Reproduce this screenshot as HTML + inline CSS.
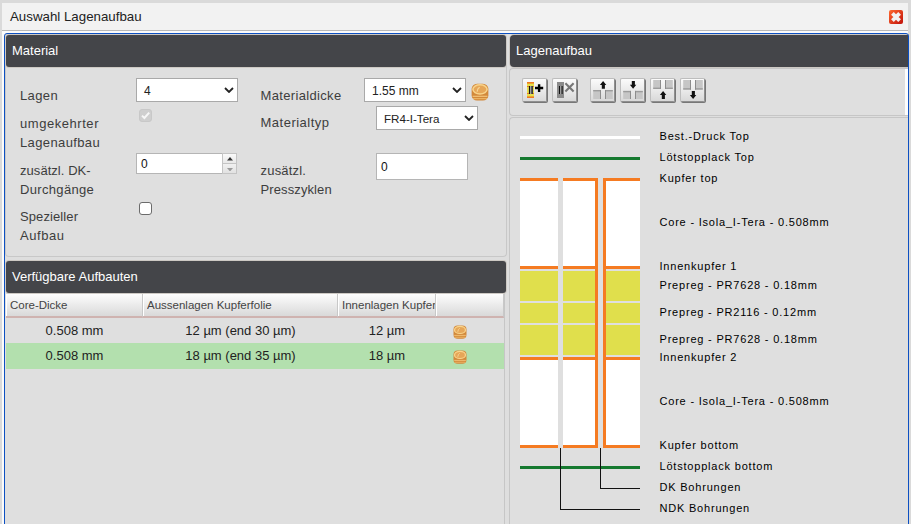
<!DOCTYPE html>
<html><head><meta charset="utf-8">
<style>
*{box-sizing:border-box}
html,body{margin:0;padding:0}
body{width:911px;height:524px;overflow:hidden;position:relative;background:#dadada;font-family:"Liberation Sans",sans-serif;color:#222}
.a{position:absolute}
.t{position:absolute;white-space:nowrap;line-height:1}
.t13{font-size:13px}
.lbl{font-size:13px;color:#3d3d3d;letter-spacing:0.3px}
.hd{position:absolute;background:#444549;border-radius:3px;box-shadow:0 0 0 1px #cdc9c4}
.ht{position:absolute;white-space:nowrap;line-height:1;color:#fff;font-size:13px}
.sel{position:absolute;background:#fff;border:1px solid #a9a9a9}
.chev{position:absolute;width:10px;height:6px}
.btn{position:absolute;width:25px;height:24px;border:1px solid #bdbdbd;border-right-color:#8f8f8f;border-bottom-color:#8f8f8f;border-radius:2px;background:linear-gradient(#fbfbfb,#d9d9d9);box-shadow:1px 1px 0 #777}
.dl{position:absolute;white-space:nowrap;line-height:1;font-size:11px;letter-spacing:0.8px;color:#000}
.th{position:absolute;top:294px;height:24px;background:linear-gradient(#fdfdfd,#d9d9d9);border-bottom:2px solid #cfb3b0;border-right:1px solid #c8c8c8;box-shadow:inset 1px 0 0 #fff}
.tht{position:absolute;white-space:nowrap;line-height:1;font-size:11.5px;color:#444;overflow:hidden}
</style></head><body>
<!-- dialog frame -->
<div class="a" style="left:2px;top:3px;width:906px;height:521px;background:#fbfbfb"></div>
<div class="a" style="left:2px;top:3px;width:906px;height:28px;background:#f2f2f2;border-bottom:1px solid #b9b9b9"></div>
<div class="t t13" style="left:10px;top:10px;font-size:13.3px;color:#222">Auswahl Lagenaufbau</div>
<svg class="a" style="left:889px;top:10px" width="14" height="14" viewBox="0 0 14 14">
<defs><linearGradient id="rg" x1="0" y1="0" x2="1" y2="1"><stop offset="0" stop-color="#ff6a30"/><stop offset="1" stop-color="#c0100a"/></linearGradient></defs>
<rect x="0" y="0" width="14" height="14" rx="2" fill="url(#rg)"/>
<path d="M3.4 3.4 L10.6 10.6 M10.6 3.4 L3.4 10.6" stroke="#f2f2f2" stroke-width="3.8"/>
</svg>
<!-- content container -->
<div class="a" style="left:4px;top:33px;width:905px;height:520px;border-radius:4px;background:#dedede"></div>

<!-- Material panel -->
<div class="a" style="left:5px;top:60px;width:502px;height:197px;background:#dfdfdf;border:1px solid #c8c8c8;border-top:none;border-radius:0 0 4px 4px"></div>
<div class="hd" style="left:6px;top:35px;width:500px;height:32px"></div>
<div class="ht" style="left:12px;top:44px">Material</div>

<div class="t lbl" style="left:20px;top:89px;letter-spacing:0.37px">Lagen</div>
<div class="t lbl" style="left:20px;top:117px;letter-spacing:0.55px">umgekehrter</div>
<div class="t lbl" style="left:20px;top:136px;letter-spacing:0.38px">Lagenaufbau</div>
<div class="t lbl" style="left:20px;top:164px;letter-spacing:0.05px">zusätzl. DK-</div>
<div class="t lbl" style="left:20px;top:183px;letter-spacing:0.33px">Durchgänge</div>
<div class="t lbl" style="left:20px;top:210px;letter-spacing:0.1px">Spezieller</div>
<div class="t lbl" style="left:20px;top:229px;letter-spacing:0.55px">Aufbau</div>
<div class="t lbl" style="left:260.5px;top:89px;letter-spacing:0.34px">Materialdicke</div>
<div class="t lbl" style="left:260.5px;top:116px;letter-spacing:0.5px">Materialtyp</div>
<div class="t lbl" style="left:260.5px;top:164px;letter-spacing:0.2px">zusätzl.</div>
<div class="t lbl" style="left:260.5px;top:183px;letter-spacing:0.11px">Presszyklen</div>

<!-- select 4 -->
<div class="sel" style="left:136px;top:78px;width:102px;height:24px"></div>
<div class="t" style="left:144px;top:85px;font-size:12px;color:#222">4</div>
<svg class="chev" style="left:224px;top:87px" viewBox="0 0 10 6"><path d="M1 1 L5 5 L9 1" fill="none" stroke="#222" stroke-width="1.8"/></svg>
<!-- disabled checkbox -->
<div class="a" style="left:139px;top:109px;width:13px;height:13px;border-radius:3px;background:#cfcfcf;border:1px solid #c8c8c8"></div>
<svg class="a" style="left:139px;top:109px" width="13" height="13" viewBox="0 0 13 13"><path d="M3 6.6 L5.4 9 L10.2 3.6" fill="none" stroke="#f7f7f7" stroke-width="2"/></svg>
<!-- number input -->
<div class="sel" style="left:136px;top:153px;width:87px;height:21px;border-color:#b5b5b5"></div>
<div class="t" style="left:141px;top:158px;font-size:12px;color:#111">0</div>
<div class="a" style="left:222px;top:153px;width:15px;height:11px;background:linear-gradient(#fafafa,#e8e8e8);border:1px solid #c4c4c4"></div>
<div class="a" style="left:222px;top:164px;width:15px;height:10px;background:linear-gradient(#f0f0f0,#e2e2e2);border:1px solid #c4c4c4;border-top:none"></div>
<svg class="a" style="left:226.5px;top:157px" width="6" height="3.5" viewBox="0 0 7 4"><path d="M0 4 L3.5 0 L7 4Z" fill="#333"/></svg>
<svg class="a" style="left:226.5px;top:167.5px" width="6" height="3.5" viewBox="0 0 7 4"><path d="M0 0 L3.5 4 L7 0Z" fill="#999"/></svg>
<!-- checkbox -->
<div class="a" style="left:139px;top:202px;width:13px;height:13px;border-radius:3px;background:#fff;border:1px solid #6b6b6b"></div>

<!-- select 1.55 -->
<div class="sel" style="left:364px;top:78px;width:102px;height:24px"></div>
<div class="t" style="left:372px;top:85px;font-size:12px;color:#222">1.55 mm</div>
<svg class="chev" style="left:452px;top:87px" viewBox="0 0 10 6"><path d="M1 1 L5 5 L9 1" fill="none" stroke="#222" stroke-width="1.8"/></svg>
<!-- coin -->
<svg class="a" style="left:471px;top:83px" width="18" height="18" viewBox="0 0 14 14"><rect x="0.5" y="0.5" width="13" height="13.2" rx="4.2" ry="4" fill="#d2883a"/>
<ellipse cx="7" cy="4.9" rx="5.5" ry="3.6" fill="#e6a658" stroke="#f8d48c" stroke-width="1.2"/>
<path d="M4.8 6.8 Q5 4 6.8 3.3" stroke="#f6d494" stroke-width="0.9" fill="none"/>
<rect x="1.2" y="9.9" width="11.6" height="0.9" fill="#f4c47a"/>
<rect x="1.6" y="11.8" width="10.8" height="0.8" fill="#f0bc6c"/></svg>
<!-- select FR4 -->
<div class="sel" style="left:376px;top:106px;width:102px;height:24px"></div>
<div class="t" style="left:384px;top:113px;font-size:11.6px;color:#222">FR4-I-Tera</div>
<svg class="chev" style="left:464px;top:115px" viewBox="0 0 10 6"><path d="M1 1 L5 5 L9 1" fill="none" stroke="#222" stroke-width="1.8"/></svg>
<!-- input presszyklen -->
<div class="sel" style="left:376px;top:153px;width:92px;height:27px;border-color:#b5b5b5"></div>
<div class="t" style="left:381px;top:161px;font-size:12px;color:#111">0</div>

<!-- Verfügbare Aufbauten panel -->
<div class="a" style="left:5px;top:280px;width:500px;height:260px;background:#dfdfdf;border-right:1px solid #c6c6c6"></div>
<div class="hd" style="left:6px;top:261px;width:500px;height:32px"></div>
<div class="ht" style="left:12px;top:270px">Verfügbare Aufbauten</div>
<div class="th" style="left:6px;width:137px"></div>
<div class="th" style="left:143px;width:195px"></div>
<div class="th" style="left:338px;width:98px"></div>
<div class="th" style="left:436px;width:68px"></div>
<div class="tht" style="left:10px;top:300px">Core-Dicke</div>
<div class="tht" style="left:147px;top:300px">Aussenlagen Kupferfolie</div>
<div class="tht" style="left:342px;top:300px;width:93px">Innenlagen Kupferfolie</div>
<div class="a" style="left:6px;top:343px;width:498px;height:26px;background:#b3e0ae"></div>
<div class="t t13" style="left:6px;top:324px;width:137px;text-align:center">0.508 mm</div>
<div class="t t13" style="left:143px;top:324px;width:195px;text-align:center">12 µm (end 30 µm)</div>
<div class="t t13" style="left:338px;top:324px;width:98px;text-align:center">12 µm</div>
<div class="t t13" style="left:6px;top:349px;width:137px;text-align:center">0.508 mm</div>
<div class="t t13" style="left:143px;top:349px;width:195px;text-align:center">18 µm (end 35 µm)</div>
<div class="t t13" style="left:338px;top:349px;width:98px;text-align:center">18 µm</div>
<svg class="a" style="left:453px;top:325px" width="14" height="14" viewBox="0 0 14 14"><rect x="0.5" y="0.5" width="13" height="13.2" rx="4.2" ry="4" fill="#d2883a"/>
<ellipse cx="7" cy="4.9" rx="5.5" ry="3.6" fill="#e6a658" stroke="#f8d48c" stroke-width="1.2"/>
<path d="M4.8 6.8 Q5 4 6.8 3.3" stroke="#f6d494" stroke-width="0.9" fill="none"/>
<rect x="1.2" y="9.9" width="11.6" height="0.9" fill="#f4c47a"/>
<rect x="1.6" y="11.8" width="10.8" height="0.8" fill="#f0bc6c"/></svg>
<svg class="a" style="left:453px;top:350px" width="14" height="14" viewBox="0 0 14 14"><rect x="0.5" y="0.5" width="13" height="13.2" rx="4.2" ry="4" fill="#d2883a"/>
<ellipse cx="7" cy="4.9" rx="5.5" ry="3.6" fill="#e6a658" stroke="#f8d48c" stroke-width="1.2"/>
<path d="M4.8 6.8 Q5 4 6.8 3.3" stroke="#f6d494" stroke-width="0.9" fill="none"/>
<rect x="1.2" y="9.9" width="11.6" height="0.9" fill="#f4c47a"/>
<rect x="1.6" y="11.8" width="10.8" height="0.8" fill="#f0bc6c"/></svg>

<!-- Lagenaufbau panel -->
<div class="hd" style="left:510px;top:35px;width:398px;height:32px;border-radius:4px 0 0 4px"></div>
<div class="ht" style="left:516px;top:44px">Lagenaufbau</div>
<div class="a" style="left:509px;top:68px;width:399px;height:48px;background:#dfdfdf;border:1px solid #c6c6c6;border-right:none;border-radius:4px 0 0 4px"></div>
<div class="a" style="left:905px;top:69px;width:3px;height:46px;background:#fdfdfd"></div>
<div class="a" style="left:509px;top:117px;width:399px;height:420px;background:#dfdfdf;border:1px solid #c6c6c6;border-right:none;border-radius:4px 0 0 0"></div>

<!-- toolbar buttons -->
<div class="btn" style="left:522px;top:78px;width:25px"></div>
<svg class="a" style="left:523px;top:78px" width="24" height="24" viewBox="0 0 24 24">
<rect x="4" y="4" width="7" height="16" fill="#e6e04a"/>
<rect x="4" y="4" width="7" height="1.6" fill="#ee7a24"/>
<rect x="4" y="18.4" width="7" height="1.6" fill="#ee7a24"/>
<rect x="4" y="8" width="7" height="1" fill="#ee7a24"/>
<rect x="4" y="15" width="7" height="1" fill="#ee7a24"/>
<rect x="5.9" y="8" width="3.9" height="8" fill="#fff"/><rect x="5.9" y="8" width="1.5" height="8" fill="#111"/>
<rect x="8.3" y="8" width="1.5" height="8" fill="#111"/>
<path d="M12 10 H20.2 M16.1 6.2 V14" stroke="#000" stroke-width="2.4"/>
</svg>
<div class="btn" style="left:552px;top:78px;width:25px"></div>
<svg class="a" style="left:553px;top:78px" width="24" height="24" viewBox="0 0 24 24">
<rect x="4" y="4" width="7" height="16" fill="#8a8a8a"/>
<rect x="5.9" y="8" width="3.9" height="8" fill="#fff"/><rect x="5.9" y="8" width="1.5" height="8" fill="#111"/>
<rect x="8.3" y="8" width="1.5" height="8" fill="#111"/>
<path d="M12.4 5.2 L20.6 13.6 M20.6 5.2 L12.4 13.6" stroke="#777" stroke-width="2.1"/>
</svg>
<div class="btn" style="left:590px;top:78px"></div>
<svg class="a" style="left:590px;top:78px" width="25" height="25" viewBox="0 0 25 25">
<path d="M13.1 2.9 L9.9 6.9 H11.8 V10.8 H14.9 V6.9 H16.3 Z" fill="#111"/>
<rect x="3.2" y="12" width="7.8" height="9" fill="#c6c6c6"/><rect x="3.2" y="12" width="7.8" height="1.4" fill="#9c9c9c"/><rect x="10" y="12" width="1" height="9" fill="#8c8c8c"/>
<rect x="15" y="12" width="7.8" height="9" fill="#c6c6c6"/><rect x="15" y="12" width="7.8" height="1.4" fill="#9c9c9c"/><rect x="15" y="12" width="1" height="9" fill="#8c8c8c"/>
</svg>
<div class="btn" style="left:620px;top:78px"></div>
<svg class="a" style="left:620px;top:78px" width="25" height="25" viewBox="0 0 25 25">
<path d="M13.1 10.8 L9.9 6.699999999999999 H11.8 V2.9 H14.9 V6.699999999999999 H16.3 Z" fill="#111"/>
<rect x="3.2" y="12.9" width="7.8" height="8.1" fill="#c6c6c6"/><rect x="3.2" y="12.9" width="7.8" height="1.4" fill="#9c9c9c"/><rect x="10" y="12.9" width="1" height="8.1" fill="#8c8c8c"/>
<rect x="15" y="12.9" width="7.8" height="8.1" fill="#c6c6c6"/><rect x="15" y="12.9" width="7.8" height="1.4" fill="#9c9c9c"/><rect x="15" y="12.9" width="1" height="8.1" fill="#8c8c8c"/>
</svg>
<div class="btn" style="left:650px;top:78px"></div>
<svg class="a" style="left:650px;top:78px" width="25" height="25" viewBox="0 0 25 25">
<rect x="3.2" y="2" width="7.8" height="9" fill="#c6c6c6"/><rect x="3.2" y="9.6" width="7.8" height="1.4" fill="#9c9c9c"/><rect x="10" y="2" width="1" height="9" fill="#8c8c8c"/>
<rect x="15" y="2" width="7.8" height="9" fill="#c6c6c6"/><rect x="15" y="9.6" width="7.8" height="1.4" fill="#9c9c9c"/><rect x="15" y="2" width="1" height="9" fill="#8c8c8c"/>
<path d="M13.1 13.1 L9.9 17.1 H11.8 V21.0 H14.9 V17.1 H16.3 Z" fill="#111"/>
</svg>
<div class="btn" style="left:680px;top:78px"></div>
<svg class="a" style="left:680px;top:78px" width="25" height="25" viewBox="0 0 25 25">
<rect x="3.2" y="2" width="7.8" height="9.6" fill="#c6c6c6"/><rect x="3.2" y="10.2" width="7.8" height="1.4" fill="#9c9c9c"/><rect x="10" y="2" width="1" height="9.6" fill="#8c8c8c"/>
<rect x="15" y="2" width="7.8" height="9.6" fill="#c6c6c6"/><rect x="15" y="10.2" width="7.8" height="1.4" fill="#9c9c9c"/><rect x="15" y="2" width="1" height="9.6" fill="#8c8c8c"/>
<path d="M13.1 21.0 L9.9 16.9 H11.8 V13.1 H14.9 V16.9 H16.3 Z" fill="#111"/>
</svg>

<!-- stack diagram -->
<div class="a" style="left:520px;top:136px;width:120px;height:3px;background:#fff"></div>
<div class="a" style="left:520px;top:157px;width:120px;height:3px;background:#167a30"></div>
<!-- cores white -->
<div class="a" style="left:520px;top:178px;width:38px;height:270px;background:#fff"></div>
<div class="a" style="left:563px;top:178px;width:35px;height:270px;background:#fff"></div>
<div class="a" style="left:603px;top:178px;width:37px;height:270px;background:#fff"></div>
<!-- prepreg region -->
<div class="a" style="left:520px;top:269px;width:38px;height:88px;background:#dfdfdf"></div>
<div class="a" style="left:563px;top:269px;width:35px;height:88px;background:#dfdfdf"></div>
<div class="a" style="left:603px;top:269px;width:37px;height:88px;background:#dfdfdf"></div>
<div class="a" style="left:520px;top:271px;width:38px;height:30px;background:#e0df4c"></div>
<div class="a" style="left:563px;top:271px;width:35px;height:30px;background:#e0df4c"></div>
<div class="a" style="left:603px;top:271px;width:37px;height:30px;background:#e0df4c"></div>
<div class="a" style="left:520px;top:303px;width:38px;height:20px;background:#e0df4c"></div>
<div class="a" style="left:563px;top:303px;width:35px;height:20px;background:#e0df4c"></div>
<div class="a" style="left:603px;top:303px;width:37px;height:20px;background:#e0df4c"></div>
<div class="a" style="left:520px;top:325px;width:38px;height:30px;background:#e0df4c"></div>
<div class="a" style="left:563px;top:325px;width:35px;height:30px;background:#e0df4c"></div>
<div class="a" style="left:603px;top:325px;width:37px;height:30px;background:#e0df4c"></div>
<!-- copper horizontals -->
<div class="a" style="left:520px;top:178px;width:38px;height:3px;background:#f57b22"></div>
<div class="a" style="left:563px;top:178px;width:35px;height:3px;background:#f57b22"></div>
<div class="a" style="left:603px;top:178px;width:37px;height:3px;background:#f57b22"></div>
<div class="a" style="left:520px;top:266px;width:38px;height:3px;background:#f57b22"></div>
<div class="a" style="left:563px;top:266px;width:35px;height:3px;background:#f57b22"></div>
<div class="a" style="left:603px;top:266px;width:37px;height:3px;background:#f57b22"></div>
<div class="a" style="left:520px;top:357px;width:38px;height:3px;background:#f57b22"></div>
<div class="a" style="left:563px;top:357px;width:35px;height:3px;background:#f57b22"></div>
<div class="a" style="left:603px;top:357px;width:37px;height:3px;background:#f57b22"></div>
<div class="a" style="left:520px;top:445px;width:38px;height:3px;background:#f57b22"></div>
<div class="a" style="left:563px;top:445px;width:35px;height:3px;background:#f57b22"></div>
<div class="a" style="left:603px;top:445px;width:37px;height:3px;background:#f57b22"></div>
<!-- copper verticals (DK plating) -->
<div class="a" style="left:595px;top:178px;width:3px;height:270px;background:#f57b22"></div>
<div class="a" style="left:603px;top:178px;width:3px;height:270px;background:#f57b22"></div>
<!-- bottom -->
<div class="a" style="left:520px;top:466px;width:120px;height:3px;background:#167a30"></div>
<div class="a" style="left:560px;top:448px;width:1px;height:62px;background:#111"></div>
<div class="a" style="left:560px;top:509px;width:80px;height:1px;background:#111"></div>
<div class="a" style="left:600px;top:448px;width:1px;height:41px;background:#111"></div>
<div class="a" style="left:600px;top:488px;width:40px;height:1px;background:#111"></div>

<div class="dl" style="left:659.5px;top:131px">Best.-Druck Top</div>
<div class="dl" style="left:659.5px;top:152px">Lötstopplack Top</div>
<div class="dl" style="left:659.5px;top:173px">Kupfer top</div>
<div class="dl" style="left:659.5px;top:217px">Core - Isola_I-Tera - 0.508mm</div>
<div class="dl" style="left:659.5px;top:261px">Innenkupfer 1</div>
<div class="dl" style="left:659.5px;top:280px">Prepreg - PR7628 - 0.18mm</div>
<div class="dl" style="left:659.5px;top:307px">Prepreg - PR2116 - 0.12mm</div>
<div class="dl" style="left:659.5px;top:334px">Prepreg - PR7628 - 0.18mm</div>
<div class="dl" style="left:659.5px;top:352px">Innenkupfer 2</div>
<div class="dl" style="left:659.5px;top:396px">Core - Isola_I-Tera - 0.508mm</div>
<div class="dl" style="left:659.5px;top:440px">Kupfer bottom</div>
<div class="dl" style="left:659.5px;top:461px">Lötstopplack bottom</div>
<div class="dl" style="left:659.5px;top:482px">DK Bohrungen</div>
<div class="dl" style="left:659.5px;top:503px">NDK Bohrungen</div>
<div class="a" style="left:4px;top:33px;width:905px;height:520px;border:1px solid #0d50c2;border-radius:3px"></div>
</body></html>
